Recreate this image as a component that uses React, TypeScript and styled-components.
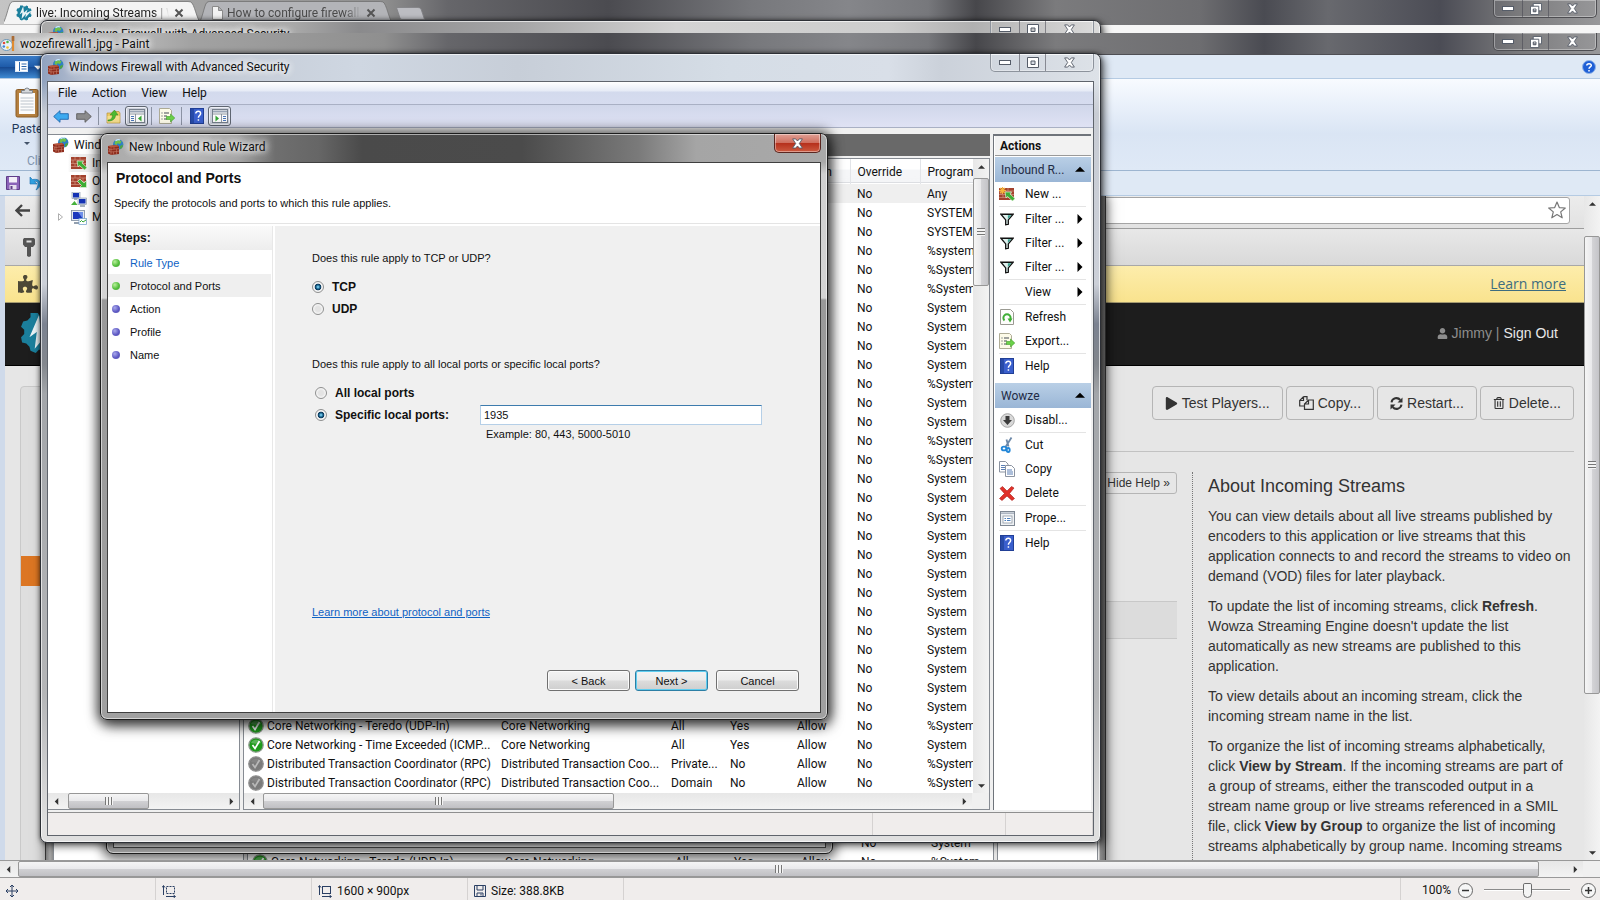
import React from "react";
import styled, { createGlobalStyle, css } from "styled-components";
import { FaPlay, FaUser, FaRegTrashAlt, FaPuzzlePiece } from "react-icons/fa";

const UI = `Roboto, "Open Sans", "Noto Sans", sans-serif`;
const SANS = `"Liberation Sans", Arial, sans-serif`;

const GlobalStyle = createGlobalStyle`
  * { box-sizing: border-box; }
  html, body, #root { height: 100%; }
  body { margin: 0; font: 12px/16px ${UI}; color: #111; overflow: hidden; background: #555; }
  button, input { font: inherit; color: inherit; }
  button { padding: 0; border: 0; background: none; }
  svg { display: block; flex: none; }
  h1, h2, p { margin: 0; }
`;

/* ---------- icons ---------- */

const FirewallIcon = () => (
  <svg width="16" height="16" viewBox="0 0 16 16">
    <circle cx="10.2" cy="5.4" r="5.2" fill="#2d7fc4" />
    <path d="M7 2.4C9 1 12 .8 13.6 2.6L12 5 9.600 4.200 8.400 6 6.600 5z" fill="#6fc04a" />
    <path d="M12 7l2.800-1.200c.2 2-.8 3.600-2.400 4.400z" fill="#4fa53b" />
    <path d="M7.500 1.800C9 .7 11 .5 12 1" stroke="#cfeaff" strokeWidth="1.200" fill="none" />
    <path d="M0 7l9-1 2 1.600V15L3 16l-3-1.500z" fill="#8e2c1d" />
    <path d="M0 7l9-1 2 1.600-8 .9z" fill="#b9573f" />
    <path d="M0 9.500l3 1 8-.9M0 12l3 1 8-.8M3 8.500V16M6 8.200v2M8.500 10.200v2M5.500 12.800v2.600M8.500 12.300V15M1.500 9.800v2.500" stroke="#d08a76" strokeWidth=".5" fill="none" />
  </svg>
);

const BrickIcon = ({ dir, star }: { dir: "in" | "out"; star?: boolean }) => (
  <svg width="16" height="14" viewBox="0 0 16 14">
    <rect x="0" y="1" width="15" height="12" fill="#a3422e" />
    <path d="M0 4h15M0 7.500h15M0 10.500h15M4 1v3M9 1v3M2 4v3.500M7 4v3.500M12 4v3.500M4 7.500v3M9 7.500v3" stroke="#d39480" strokeWidth=".7" />
    {dir === "in" ? (
      <path d="M6 5h6.500l-1.500 2L16 11.500 13.500 14 8.500 9.500 7 11z" fill="#3fae35" stroke="#e2f7dc" strokeWidth=".7" />
    ) : (
      <path d="M15.500 13.500H8.500l2-2L6.500 7.500 9 5l4 4 2.500-2.500z" fill="#3fae35" stroke="#e2f7dc" strokeWidth=".7" />
    )}
    {star && <path d="M3.500 0v7M0 3.500h7M1 1l5 5M6 1L1 6" stroke="#f6b53a" strokeWidth="1.200" />}
  </svg>
);

const ComputersIcon = () => (
  <svg width="16" height="15" viewBox="0 0 16 15">
    <rect x="1" y="0" width="8" height="6.500" fill="#dfe6ee" stroke="#8392a3" strokeWidth=".6" />
    <rect x="2" y="1" width="6" height="4.500" fill="#1533b4" />
    <rect x="7" y="6" width="8.500" height="6.500" fill="#dfe6ee" stroke="#8392a3" strokeWidth=".6" />
    <rect x="8" y="7" width="6.500" height="4.500" fill="#1533b4" />
    <path d="M9 14h5M3 7h3" stroke="#8b99a8" strokeWidth="1.400" />
    <path d="M0 13l3.500-4 3 4z" fill="#46b13c" />
  </svg>
);

const MonitorIcon = () => (
  <svg width="16" height="15" viewBox="0 0 16 15">
    <rect x=".5" y=".5" width="13" height="10" fill="#e3e9f0" stroke="#7c8b9e" strokeWidth=".8" />
    <rect x="2" y="2" width="10" height="7" fill="#1c39bd" />
    <path d="M7 2h5v7z" fill="#6f90e8" />
    <path d="M3 13h6" stroke="#93a0b0" strokeWidth="2" />
    <rect x="8" y="8.500" width="7.500" height="6" fill="#fff" stroke="#6b9ccb" strokeWidth=".7" />
    <path d="M9 12l1.500-1.500 1.500 1.500 3-2" stroke="#35a634" fill="none" />
  </svg>
);

const ArrowIcon = ({ dir }: { dir: "left" | "right" }) => (
  <svg width="16" height="13" viewBox="0 0 16 13">
    {dir === "left" ? (
      <path d="M.7 6.500L7 .7v3h8.300v5.600H7v3z" fill="#3eaaf0" stroke="#1f67ad" strokeWidth=".9" />
    ) : (
      <path d="M15.300 6.500L9 .7v3H.7v5.600H9v3z" fill="#8b8b8b" stroke="#5c5c5c" strokeWidth=".9" />
    )}
  </svg>
);

const FolderUpIcon = () => (
  <svg width="15" height="15" viewBox="0 0 15 15">
    <path d="M1 4h5l1-1.500h6L14 4v10H1z" fill="#eccb67" stroke="#b8923a" strokeWidth=".7" />
    <path d="M1.500 7H13.500v6.500h-12z" fill="#f5de8f" />
    <path d="M2 11c3 0 4.500-2 4.500-5H4L8.500 1 12 6H9.500c0 4-3 6-7.500 6z" fill="#4cb932" stroke="#2f8a1e" strokeWidth=".5" />
  </svg>
);

const PaneIcon = ({ side }: { side: "left" | "right" }) => (
  <svg width="16" height="14" viewBox="0 0 16 14">
    <rect x=".5" y=".5" width="15" height="13" fill="#fbfbfb" stroke="#77808c" />
    <path d="M1 2.500h14" stroke="#9aa5b5" strokeWidth="2" />
    <path d="M1 5h14" stroke="#77808c" strokeWidth=".8" />
    {side === "left" ? (
      <>
        <path d="M6.500 5v9" stroke="#77808c" strokeWidth=".8" />
        <path d="M2 7.500h3M2 9.500h3M2 11.500h3" stroke="#4b76b8" />
        <path d="M12.500 6.500v6L9 9.500z" fill="#35a634" />
      </>
    ) : (
      <>
        <path d="M9.500 5v9" stroke="#77808c" strokeWidth=".8" />
        <path d="M11 7.500h3M11 9.500h3M11 11.500h3" stroke="#4b76b8" />
        <path d="M3.500 6.500v6L7 9.500z" fill="#35a634" />
      </>
    )}
  </svg>
);

const ExportIcon = () => (
  <svg width="16" height="16" viewBox="0 0 16 16">
    <path d="M.5.5h10l2 2v13H.5z" fill="#fdfbe9" stroke="#a7a48c" strokeWidth=".9" />
    <path d="M2.500 5h1M2.500 8h1M2.500 11h1M5 5h5M5 8h3M5 11h3" stroke="#444b55" strokeWidth="1.100" />
    <path d="M7.500 8.500h4V6l4.300 4-4.300 4v-2.500h-4z" fill="#6bd14a" stroke="#3f9c27" strokeWidth=".6" />
  </svg>
);

const HelpBookIcon = () => (
  <svg width="14" height="16" viewBox="0 0 14 16">
    <rect x=".5" y=".5" width="13" height="15" fill="#3a5fcd" stroke="#213f96" />
    <path d="M1 1h3v14H1z" fill="#274aa8" />
    <path d="M5.800 5.500C5.800 2.600 10.600 2.700 10.600 5.500c0 2-2.200 2-2.200 4.200M8.400 11.200v1.600" stroke="#fff" strokeWidth="1.500" fill="none" />
  </svg>
);

const FilterIcon = () => (
  <svg width="14" height="13" viewBox="0 0 16 14">
    <path d="M1 1h14L9.500 7.500v5L6.500 13V7.500z" fill="#dff1ee" stroke="#111" strokeWidth="1.500" />
    <path d="M9 2h4L9 6.500z" fill="#3ea393" />
  </svg>
);

const RefreshPageIcon = () => (
  <svg width="14" height="16" viewBox="0 0 14 16">
    <path d="M.5.500h10l3 3v12H.5z" fill="#fdfdfb" stroke="#9a9a92" />
    <path d="M4.500 11.500A3.600 3.600 0 1 1 9.500 11.500" stroke="#3fae35" strokeWidth="2" fill="none" />
    <path d="M7.500 9.500h5L10 13.500z" fill="#3fae35" />
  </svg>
);

const DisableIcon = () => (
  <svg width="15" height="15" viewBox="0 0 15 15">
    <circle cx="7.500" cy="7.500" r="6.800" fill="#d8d8d8" stroke="#a5a5a5" />
    <path d="M5.500 3h4v4H12l-4.500 5L3 7h2.500z" fill="#3b3b3b" />
  </svg>
);

const CutIcon = () => (
  <svg width="14" height="16" viewBox="0 0 14 16">
    <path d="M11.500.5L5.500 10M6.500 2.500l2 7" stroke="#6c88a8" strokeWidth="1.800" fill="none" />
    <ellipse cx="4" cy="11.500" rx="2.300" ry="1.900" fill="none" stroke="#2387d8" strokeWidth="1.900" />
    <ellipse cx="8.200" cy="13" rx="1.500" ry="2" fill="none" stroke="#2387d8" strokeWidth="1.900" />
  </svg>
);

const CopyPagesIcon = () => (
  <svg width="16" height="16" viewBox="0 0 16 16">
    <path d="M.5.5h6l2.500 2.500v8H.5z" fill="#fff" stroke="#8b93a0" />
    <path d="M2 4.500h4M2 6.500h4M2 8.500h4" stroke="#5b7fb5" />
    <path d="M6.500 4.500h6l3 3v8h-9z" fill="#fff" stroke="#8b93a0" />
    <path d="M8 9h5M8 11h6M8 13h6" stroke="#5b7fb5" />
  </svg>
);

const DeleteIcon = () => (
  <svg width="16" height="15" viewBox="0 0 16 15">
    <path d="M1 2.500L3.500.5 8 5l4.500-4.500L15 2 10.500 7.500l5 5L13 14.500 8 10l-5 4.500-2.500-2 5-5z" fill="#e03129" stroke="#a81812" strokeWidth=".6" />
  </svg>
);

const PropertiesIcon = () => (
  <svg width="15" height="15" viewBox="0 0 15 15">
    <rect x=".5" y=".5" width="14" height="14" fill="#eef1f4" stroke="#7f8894" />
    <path d="M1 2.200h13" stroke="#aab3bf" strokeWidth="1.500" />
    <rect x="3" y="5" width="9" height="7" fill="#fff" stroke="#8e98a5" strokeWidth=".8" />
    <path d="M4.500 7.500h1.500M7 7.500h3.500M4.500 9.500h1.500M7 9.500h3.500" stroke="#4f81bd" />
  </svg>
);

const CheckIcon = ({ on }: { on: boolean }) => (
  <svg width="16" height="16" viewBox="0 0 16 16">
    <circle cx="8" cy="8" r="7.200" fill={on ? "#1f9a1c" : "#7b7b7b"} stroke={on ? "#8c9a8c" : "#8f8f8f"} strokeWidth="1.300" />
    <path d="M3 6a5.500 5.500 0 0 1 10 0c-3 1-6 1-10 0z" fill="#fff" opacity={on ? ".25" : ".08"} />
    <path d="M4.500 8l2.500 3.500L11.500 4" stroke={on ? "#fff" : "#b9b9b9"} strokeWidth="1.700" fill="none" />
  </svg>
);

const WowzaIcon = ({ size }: { size: number }) => (
  <svg width={size} height={size} viewBox="0 0 40 40">
    <path d="M17 1l2 3h4l3-3 4 2v4l3 2 4 0 2 5-3 3v5l3 3-2 5h-4l-3 3v4l-5 2-3-3h-4l-3 3-5-2-1-4-3-3-4-1-1-5 3-3v-4l-3-3 2-5 4-1 3-3 0-4z" fill="#1b7f9c" />
    <path d="M18 3L9 24l7-5-2 16L25 22l-2 10L40 13l-14 7 3-9-9 8z" fill="#e9f3f6" />
  </svg>
);

const PageIcon = () => (
  <svg width="11" height="14" viewBox="0 0 11 14">
    <path d="M.5.5h6l4 4v9H.5zM6.500.5v4h4" fill="#f2f2f2" stroke="#8b8b8b" />
  </svg>
);

const PaletteIcon = () => (
  <svg width="16" height="16" viewBox="0 0 16 16">
    <ellipse cx="6.500" cy="9" rx="6" ry="5.500" fill="#e8f1f8" stroke="#6a95b8" />
    <circle cx="4" cy="7" r="1.300" fill="#e04b3a" /><circle cx="7.500" cy="6" r="1.300" fill="#4db748" />
    <circle cx="3.800" cy="10.500" r="1.300" fill="#3f83d6" /><circle cx="7.500" cy="11.500" r="1.300" fill="#f2c230" />
    <path d="M13 1v14" stroke="#e08a2e" strokeWidth="2.200" /><path d="M13 0v5" stroke="#a96a35" strokeWidth="2.600" />
  </svg>
);

const FileTabIcon = () => (
  <svg width="13" height="11" viewBox="0 0 13 11">
    <rect x=".5" y=".5" width="12" height="10" fill="#fff" stroke="#dce9f8" />
    <path d="M4.500 1v9" stroke="#2a66ad" /><path d="M6.500 3h5M6.500 5.500h5M6.500 8h5" stroke="#2a66ad" />
  </svg>
);

const ClipboardIcon = () => (
  <svg width="24" height="31" viewBox="0 0 24 31">
    <rect x="1" y="2.500" width="22" height="27.500" rx="1.500" fill="#b5803f" stroke="#8b5c26" />
    <rect x="4" y="6" width="16" height="21" fill="#fcfcfc" />
    <path d="M5.500 11h13M5.500 14h13M5.500 17h13M5.500 20h13M5.500 23h13" stroke="#bcc4cc" />
    <path d="M6.500 6V3.500h3a2.500 2.500 0 0 1 5 0h3V6z" fill="#d5d8db" stroke="#777e86" strokeWidth=".9" />
  </svg>
);

const SaveIcon = () => (
  <svg width="14" height="14" viewBox="0 0 14 14">
    <path d="M.5.500h13v13H.5z" fill="#8b63b8" stroke="#5f3e88" />
    <rect x="3" y="1" width="8" height="5.500" fill="#f3eff8" /><rect x="3.500" y="9" width="7" height="4.500" fill="#e7e0ef" />
    <rect x="4.500" y="10" width="2" height="3" fill="#5f3e88" />
  </svg>
);

const UndoIcon = () => (
  <svg width="14" height="15" viewBox="0 0 14 15">
    <path d="M1 1v7h7L5.500 5.500C9 4.500 10.500 8 7 14c7-4 6-12-3.500-10.500z" fill="#2fa0e0" stroke="#1b6fae" strokeWidth=".6" />
  </svg>
);

const BackIcon = () => (
  <svg width="15" height="13" viewBox="0 0 15 13">
    <path d="M7 1L1.500 6.500 7 12M2 6.500h13" stroke="#444" strokeWidth="2.300" fill="none" />
  </svg>
);

const KeyIcon = () => (
  <svg width="14" height="20" viewBox="0 0 14 20">
    <path d="M2 1h10l1 1.500v5L11 10H9v9l-2 1-2-1v-9H3L1 7.500v-5zM4.500 3.500v2h5v-2z" fill="#555" fillRule="evenodd" />
  </svg>
);

const StarIcon = () => (
  <svg width="18" height="18" viewBox="0 0 18 18">
    <path d="M9 1l2.300 5.600 6 .4-4.600 3.900 1.500 5.900L9 13.600l-5.200 3.200 1.500-5.900L.7 7l6-.4z" fill="#fff" stroke="#777" strokeWidth="1.200" strokeLinejoin="round" />
  </svg>
);

const HelpRoundIcon = () => (
  <svg width="14" height="14" viewBox="0 0 14 14">
    <circle cx="7" cy="7" r="6.500" fill="#1f5fd6" stroke="#8fb3e8" />
    <path d="M4.800 5.600C4.800 3 9.300 3 9.300 5.500 9.300 7 7 7 7 8.800M7 10v1.400" stroke="#fff" strokeWidth="1.500" fill="none" />
  </svg>
);

const FilesIcon = () => (
  <svg width="15" height="14" viewBox="0 0 15 14">
    <path d="M4.500.7H8v3.500M4.500.7L.7 4.500V10H5M4.500.7v3.800H.7" fill="none" stroke="#333" strokeWidth="1.200" />
    <path d="M9.500 4h4.800v9.300H5.500V8zM9.500 4v4h-4" fill="none" stroke="#333" strokeWidth="1.200" />
  </svg>
);

const RestartIcon = () => (
  <svg width="13" height="13" viewBox="0 0 13 13">
    <path d="M1.500 5.300A5 5 0 0 1 10.300 3M11.500 7.700A5 5 0 0 1 2.700 10" fill="none" stroke="#333" strokeWidth="2" />
    <path d="M12.500.5v5h-5zM.5 12.500v-5h5z" fill="#333" />
  </svg>
);

const MoveIcon = () => (
  <svg width="12" height="12" viewBox="0 0 12 12">
    <path d="M6 0v12M0 6h12M4 2l2-2 2 2M4 10l2 2 2-2M2 4L0 6l2 2M10 4l2 2-2 2" stroke="#2a3f63" fill="none" />
  </svg>
);

const SizeIcon = ({ dashed }: { dashed?: boolean }) => (
  <svg width="14" height="13" viewBox="0 0 14 13">
    <path d="M1.500 1v9M0 2.500L1.500.5 3 2.500M4 11.500h9M11.500 10l2 1.500-2 1.500" stroke="#2a3f63" fill="none" />
    <rect x="4.500" y="1.500" width="8" height="7" fill="none" stroke="#2a3f63" strokeDasharray={dashed ? "2 1" : undefined} />
  </svg>
);

const DiskIcon = () => (
  <svg width="12" height="12" viewBox="0 0 12 12">
    <path d="M.5.500h11v11H.5zM3 .5v4.500h6V.5M3 11.500V8h6v3.500M7 8.500v2" stroke="#2a3f63" fill="none" />
  </svg>
);

const ExpanderIcon = () => (
  <svg width="5" height="8" viewBox="0 0 5 8"><path d="M.5.7v6.600L4.500 4z" fill="#fff" stroke="#999" strokeWidth=".8" /></svg>
);

const Tri = ({ dir, size = 6, color = "#333" }: { dir: "up" | "down" | "left" | "right"; size?: number; color?: string }) => {
  const d = { up: "M0 8l6-6 6 6z", down: "M0 4l6 6 6-6z", left: "M9 0v12L3 6z", right: "M3 0v12l6-6z" }[dir];
  return <svg width={size} height={size} viewBox="0 0 12 12"><path d={d} fill={color} /></svg>;
};

const MinGlyph = () => <svg width="12" height="6" viewBox="0 0 12 6"><rect x=".5" y=".5" width="11" height="4" fill="#fff" stroke="#555c68" /></svg>;
const MaxGlyph = () => (
  <svg width="12" height="11" viewBox="0 0 12 11"><path d="M.5.5h11v10H.5zM4 4v3.500h4V4z" fill="#fff" fillRule="evenodd" stroke="#555c68" /></svg>
);
const RestoreGlyph = () => (
  <svg width="12" height="12" viewBox="0 0 13 13">
    <path d="M3.500.5h9v8h-9z" fill="#fff" stroke="#555c68" />
    <path d="M.5 3.500h9v9h-9zM3.500 6.500v3h3v-3z" fill="#fff" fillRule="evenodd" stroke="#555c68" />
  </svg>
);
const CloseGlyph = () => (
  <svg width="11" height="11" viewBox="0 0 12 11">
    <path d="M.7.500h3.300L6 2.800 8 .5h3.300L8 5.500l3.300 5H8L6 8.200 4 10.500H.7L4 5.500z" fill="#fff" stroke="#555c68" strokeWidth="1" />
  </svg>
);

/* ---------- shared window parts ---------- */

const Desktop = styled.div`
  position: relative;
  height: 100vh;
  overflow: hidden;
`;

const glass = css`
  background: linear-gradient(90deg, #c4c4c4 0, #b4b4b4 9%, #a2a2a2 12%, #8f8f8f 24%, #66666a 28%, #4b4b50 38%, #77787c 47%,
    #85868a 53%, #77787c 58%, #47474b 61%, #7b7b7d 66%, #6d6d70 75%, #4a4b52 79%, #68696e 83%, #4b4c55 90%, #7b7b7d 95%, #98989a 100%);
`;

const CaptionGroup = styled.div<{ $dark?: boolean }>`
  display: flex;
  height: 18px;
  border: 1px solid ${(p) => (p.$dark ? "#4e4e52" : "#8d939c")};
  border-top: 0;
  border-radius: 0 0 5px 5px;
  box-shadow: inset 0 0 0 1px rgba(255, 255, 255, 0.35);
  align-self: flex-start;
`;

const CaptionButton = styled.button<{ $w: number }>`
  width: ${(p) => p.$w}px;
  display: grid;
  place-items: center;
  & + & { border-left: 1px solid rgba(70, 70, 80, 0.55); }
`;

const Captions = ({ restore, dark }: { restore?: boolean; dark?: boolean }) => (
  <CaptionGroup $dark={dark}>
    <CaptionButton $w={28} aria-label="Minimize"><MinGlyph /></CaptionButton>
    <CaptionButton $w={26} aria-label="Maximize">{restore ? <RestoreGlyph /> : <MaxGlyph />}</CaptionButton>
    <CaptionButton $w={48} aria-label="Close"><CloseGlyph /></CaptionButton>
  </CaptionGroup>
);

const TitleText = styled.span`
  flex: 1;
  white-space: nowrap;
  text-shadow: 0 0 6px #fff, 0 0 8px #fff, 0 0 10px rgba(255, 255, 255, 0.8);
`;

const ScrollTrack = styled.div<{ $v?: boolean }>`
  display: flex;
  flex: none;
  flex-direction: ${(p) => (p.$v ? "column" : "row")};
  ${(p) => (p.$v ? "width: 16px;" : "height: 16px;")}
  background: ${(p) => (p.$v ? "linear-gradient(90deg,#e7e7e7,#f3f3f3)" : "linear-gradient(#e7e7e7,#f3f3f3)")};
`;

const ScrollArrow = styled.button<{ $end?: boolean }>`
  flex: none;
  width: 16px;
  height: 16px;
  display: grid;
  place-items: center;
  ${(p) => p.$end && "margin-top: auto; margin-left: auto;"}
`;

const ScrollThumb = styled.div<{ $v?: boolean; $gap: number; $size: string }>`
  display: grid;
  place-items: center;
  border: 1px solid #979797;
  border-radius: 2px;
  ${(p) =>
    p.$v
      ? `height: ${p.$size}; margin-top: ${p.$gap}px; background: linear-gradient(90deg,#f5f5f5,#e9e9eb 48%,#d3d3d6 52%,#c4c4c8);`
      : `width: ${p.$size}; margin-left: ${p.$gap}px; background: linear-gradient(#f5f5f5,#e9e9eb 48%,#d0d0d3 52%,#c0c0c4);`}
`;

const ScrollGrip = styled.span<{ $v?: boolean }>`
  width: 8px;
  height: 8px;
  background: repeating-linear-gradient(${(p) => (p.$v ? "180deg" : "90deg")}, #777 0 1px, #f4f4f4 1px 3px);
`;

const Scrollbar = ({ v, gap, size }: { v?: boolean; gap: number; size: string }) => (
  <ScrollTrack $v={v}>
    <ScrollArrow aria-label="Scroll back"><Tri dir={v ? "up" : "left"} size={7} /></ScrollArrow>
    <ScrollThumb $v={v} $gap={gap} $size={size}><ScrollGrip $v={v} /></ScrollThumb>
    <ScrollArrow $end aria-label="Scroll forward"><Tri dir={v ? "down" : "right"} size={7} /></ScrollArrow>
  </ScrollTrack>
);

/* ---------- browser behind ---------- */

const BrowserTop = styled.header`
  ${glass}
  display: flex;
  justify-content: space-between;
  height: 25px;
  padding-right: 3px;
`;

const TabStrip = styled.div`
  display: flex;
  align-items: flex-end;
  padding-left: 4px;
`;

const Tab = styled.div<{ $active?: boolean; $w: number }>`
  position: relative;
  width: ${(p) => p.$w}px;
  height: 24px;
  display: flex;
  align-items: center;
  gap: 4px;
  padding: 0 9px 0 12px;
  color: ${(p) => (p.$active ? "#222" : "#4c4c4c")};
  > * { position: relative; }
`;

const TabShape = styled.svg`
  && { position: absolute; }
  inset: 0;
  width: 100%;
  height: 100%;
`;

const TabOutline = ({ fill }: { fill: string }) => (
  <TabShape viewBox="0 0 196 24" preserveAspectRatio="none">
    <path d="M-3 24C2 22 4 4 7 1.500Q8 .5 10 .5H184Q187 .5 188 2C192 8 193 21 199 24z" fill={fill} stroke="#707070" strokeWidth=".8" />
  </TabShape>
);

const TabLabel = styled.span`
  flex: 1;
  overflow: hidden;
  white-space: nowrap;
  mask-image: linear-gradient(90deg, #000 88%, transparent);
`;

const TabClose = styled.button`
  width: 18px;
  height: 12px;
`;

const NewTab = styled.button`
  width: 29px;
  height: 13px;
  margin: 0 0 5px 4px;
`;

const BrowserBar = styled.div`
  height: 20px;
  background: #f6f6f6;
`;

const CloseX = () => (
  <svg width="12" height="12" viewBox="0 0 12 12"><path d="M2.500 2.500l7 7M9.500 2.500l-7 7" stroke="#555" strokeWidth="2" /></svg>
);

/* ---------- console window ---------- */

const ConsoleWindow = styled.section<{ $top: number; $back?: boolean }>`
  position: absolute;
  left: 40px;
  top: ${(p) => p.$top}px;
  width: 1061px;
  height: 790px;
  display: flex;
  flex-direction: column;
  padding: 0 6px 6px;
  border: 1px solid #2d3036;
  border-radius: 7px;
  background: ${(p) =>
    p.$back
      ? "linear-gradient(90deg,#a9a9a9 0,#bdbdbd 12%,#a8a8a8 24%,#8a8a8c 30%,#a5a5a6 45%,#d3d3d3 60%,#cdcdcd 80%,#b0b0b0 88%,#dcdcdc 100%)"
      : `linear-gradient(#0000 28px,#c8ccd4 60px,#ccd0d8 230px,#7b8290 270px,#83878d 310px,#a3a6aa 340px,#b5b6b8 640px,#dfdfdf 770px),
         linear-gradient(90deg,#8fa1be 0,#b7c1d2 4%,#c3cad5 15%,#cfd7e2 30%,#c7ced8 45%,#d5dde6 65%,#d9dfe8 80%,#cbd1da 85%,#dde2e8 100%)`};
  box-shadow: inset 0 0 0 1px rgba(255, 255, 255, 0.65), 3px 3px 8px rgba(0, 0, 0, 0.6), 0 0 4px rgba(0, 0, 0, 0.5);
`;

const TitleBar = styled.div<{ $h: number }>`
  flex: none;
  display: flex;
  align-items: center;
  gap: 5px;
  height: ${(p) => p.$h}px;
  padding: 0 0 2px 1px;
`;

const ConsoleClient = styled.div`
  flex: 1;
  min-height: 0;
  display: flex;
  flex-direction: column;
  border: 1px solid #5f646c;
  background: #f0f0f0;
`;

const MenuBar = styled.nav`
  display: flex;
  align-items: center;
  gap: 15px;
  height: 23px;
  padding-left: 10px;
  border-bottom: 1px solid #a9b0c4;
  background: linear-gradient(#fff, #e6ebf6 9px, #d3daed 10px, #d6dcef);
`;

const ToolBar = styled.div`
  display: flex;
  align-items: center;
  height: 23px;
  padding-left: 1px;
  border-bottom: 1px solid #a9b0c4;
  background: linear-gradient(#d0d7ea, #dfe2f4);
`;

const ToolButton = styled.button<{ $pressed?: boolean }>`
  width: 23px;
  height: 20px;
  display: grid;
  place-items: center;
  ${(p) => p.$pressed && "border: 1px solid #5f6672; border-radius: 3px; background: #ccd0dc; box-shadow: inset 0 0 0 1px #eef0f6;"}
`;

const ToolSep = styled.span`
  width: 1px;
  height: 18px;
  margin: 0 3px;
  background: #8c93a4;
`;

const Panes = styled.div`
  flex: 1;
  min-height: 0;
  display: grid;
  grid-template-columns: 192px minmax(0, 1fr) 98px;
  gap: 3px;
  padding: 6px 2px 2px 0;
`;

const TreePane = styled.div`
  display: flex;
  flex-direction: column;
  background: #fff;
  border: solid #868b92;
  border-width: 1px 1px 1px 0;
`;

const TreeList = styled.ul`
  flex: 1;
  margin: 0;
  padding: 1px 0 0;
  list-style: none;
`;

const TreeItem = styled.li<{ $level: number; $selected?: boolean }>`
  display: flex;
  align-items: center;
  gap: 5px;
  height: 18px;
  padding-left: ${(p) => (p.$level ? 10 : 5)}px;
  white-space: nowrap;
  ${(p) => p.$selected && "background: linear-gradient(90deg,#fff 20px,#ededed 24px);"}
`;

const ExpandSlot = styled.span`
  width: 8px;
`;

const ListPane = styled.div`
  display: flex;
  flex-direction: column;
  min-height: 0;
`;

const ListCaption = styled.div`
  height: 22px;
  flex: none;
  background: #696969;
`;

const ListFrame = styled.div`
  flex: 1;
  min-height: 0;
  margin-top: 2px;
  border: 1px solid #868b92;
  background: #fff;
  display: flex;
  flex-direction: column;
`;

const ListScroll = styled.div`
  flex: 1;
  min-height: 0;
  display: flex;
`;

const TableClip = styled.div`
  flex: 1;
  overflow: hidden;
`;

const RuleTable = styled.table`
  width: 760px;
  table-layout: fixed;
  border-collapse: collapse;
  th, td { padding: 0 0 0 7px; height: 19px; text-align: left; font-weight: 400; white-space: nowrap; overflow: hidden; }
  th { height: 25px; border-right: 1px solid #e2e4e8; background: linear-gradient(#fff 10px, #f5f6f8 11px, #f4f5f7 23px, #dcdee2 23px 24px, #fff 24px); }
  td:first-child { padding-left: 4px; }
  tr[aria-selected="true"] td { background: #efefef; }
`;

const RuleName = styled.span`
  display: flex;
  gap: 3px;
`;

const ListFoot = styled.div`
  display: flex;
  padding-right: 17px;
  background: #f0f0f0;
  > * { flex: 1; }
`;

const ActionPane = styled.aside`
  background: #fff;
  border: solid #6f747b;
  border-width: 2px 0 0 1px;
  padding: 0 0 0 1px;
  display: flex;
  flex-direction: column;
`;

const ActionTitle = styled.h2`
  height: 20px;
  padding-left: 5px;
  font: bold 12px/20px ${UI};
  background: #f2f2f2;
  border-bottom: 1px solid #9a9a9a;
  margin-bottom: 1px;
`;

const ActionGroup = styled.div`
  display: flex;
  align-items: center;
  justify-content: space-between;
  height: 25px;
  padding: 0 6px;
  color: #1f2b45;
  background: linear-gradient(#b9cfe6, #9ab6d6);
`;

const ActionList = styled.ul`
  margin: 0 0 5px;
  padding: 0;
  list-style: none;
`;

const ActionRow = styled.li<{ $sep?: boolean }>`
  padding-left: 4px;
  ${(p) => p.$sep && "&::after { content: ''; display: block; height: 1px; margin-right: 5px; background: #e4e4e4; }"}
`;

const ActionButton = styled.button`
  display: grid;
  grid-template-columns: 16px 1fr 12px;
  gap: 10px;
  align-items: center;
  width: 100%;
  height: 24px;
  padding-right: 5px;
  text-align: left;
  white-space: nowrap;
  > svg { justify-self: center; }
`;

const StatusStrip = styled.div`
  display: flex;
  height: 23px;
  border-top: 1px solid #8f8f8f;
  background: #f0edec;
`;

const StatusCell = styled.span<{ $w?: number }>`
  ${(p) => (p.$w ? `width: ${p.$w}px;` : "flex: 1;")}
  border-right: 1px solid #d5d2d1;
`;

type Rule = { prog: string; name?: string; group?: string; profile?: string; enabled?: string; on?: boolean };
const S: Rule = { prog: "System" };
const P: Rule = { prog: "%System" };
const RULES: Rule[] = [
  { prog: "Any" }, { prog: "SYSTEM" }, { prog: "SYSTEM" }, { prog: "%system" }, P, P, S, S, S, S, P, S, S, P, P,
  S, S, S, S, S, S, S, S, S, S, S, S, S,
  { prog: "%System", name: "Core Networking - Teredo (UDP-In)", group: "Core Networking", profile: "All", enabled: "Yes", on: true },
  { prog: "System", name: "Core Networking - Time Exceeded (ICMP...", group: "Core Networking", profile: "All", enabled: "Yes", on: true },
  { prog: "%System", name: "Distributed Transaction Coordinator (RPC)", group: "Distributed Transaction Coo...", profile: "Private...", enabled: "No", on: false },
  { prog: "%System", name: "Distributed Transaction Coordinator (RPC)", group: "Distributed Transaction Coo...", profile: "Domain", enabled: "No", on: false },
];

const RuleCols = () => (
  <colgroup>
    <col width="250" /><col width="170" /><col width="59" /><col width="67" /><col width="60" /><col width="70" /><col />
  </colgroup>
);

const RuleRow = ({ r, selected }: { r: Rule; selected?: boolean }) => (
  <tr aria-selected={selected}>
    <td>{r.name && <RuleName><CheckIcon on={!!r.on} />{r.name}</RuleName>}</td>
    <td>{r.group}</td>
    <td>{r.profile}</td>
    <td>{r.enabled}</td>
    <td>{r.name && "Allow"}</td>
    <td>No</td>
    <td>{r.prog}</td>
  </tr>
);

type Act = { icon?: React.ReactNode; label: string; more?: boolean; sep?: boolean };
const INBOUND: Act[] = [
  { icon: <BrickIcon dir="in" star />, label: "New ...", sep: true },
  { icon: <FilterIcon />, label: "Filter ...", more: true },
  { icon: <FilterIcon />, label: "Filter ...", more: true },
  { icon: <FilterIcon />, label: "Filter ...", more: true, sep: true },
  { label: "View", more: true, sep: true },
  { icon: <RefreshPageIcon />, label: "Refresh" },
  { icon: <ExportIcon />, label: "Export...", sep: true },
  { icon: <HelpBookIcon />, label: "Help" },
];
const WOWZE: Act[] = [
  { icon: <DisableIcon />, label: "Disabl...", sep: true },
  { icon: <CutIcon />, label: "Cut" },
  { icon: <CopyPagesIcon />, label: "Copy" },
  { icon: <DeleteIcon />, label: "Delete", sep: true },
  { icon: <PropertiesIcon />, label: "Prope...", sep: true },
  { icon: <HelpBookIcon />, label: "Help" },
];

const Actions = ({ items }: { items: Act[] }) => (
  <ActionList>
    {items.map((a, i) => (
      <ActionRow key={i} $sep={a.sep}>
        <ActionButton>
          {a.icon ?? <span />}
          <span>{a.label}</span>
          {a.more && <Tri dir="right" size={10} color="#000" />}
        </ActionButton>
      </ActionRow>
    ))}
  </ActionList>
);

const Console = () => (
  <ConsoleWindow $top={53}>
    <TitleBar $h={27}><FirewallIcon /><TitleText>Windows Firewall with Advanced Security</TitleText><Captions /></TitleBar>
    <ConsoleClient>
      <MenuBar><span>File</span><span>Action</span><span>View</span><span>Help</span></MenuBar>
      <ToolBar>
        <ToolButton aria-label="Back"><ArrowIcon dir="left" /></ToolButton>
        <ToolButton aria-label="Forward"><ArrowIcon dir="right" /></ToolButton>
        <ToolSep />
        <ToolButton aria-label="Up one level"><FolderUpIcon /></ToolButton>
        <ToolButton $pressed aria-label="Console tree"><PaneIcon side="left" /></ToolButton>
        <ToolSep />
        <ToolButton aria-label="Export list"><ExportIcon /></ToolButton>
        <ToolSep />
        <ToolButton aria-label="Help"><HelpBookIcon /></ToolButton>
        <ToolButton $pressed aria-label="Action pane"><PaneIcon side="right" /></ToolButton>
      </ToolBar>
      <Panes>
        <TreePane>
          <TreeList>
            <TreeItem $level={0}><FirewallIcon />Windows</TreeItem>
            <TreeItem $level={1} $selected><ExpandSlot /><BrickIcon dir="in" />Inbound</TreeItem>
            <TreeItem $level={1}><ExpandSlot /><BrickIcon dir="out" />Outbound</TreeItem>
            <TreeItem $level={1}><ExpandSlot /><ComputersIcon />Connection</TreeItem>
            <TreeItem $level={1}><ExpandSlot><ExpanderIcon /></ExpandSlot><MonitorIcon />Monitoring</TreeItem>
          </TreeList>
          <Scrollbar gap={4} size="81px" />
        </TreePane>
        <ListPane>
          <ListCaption />
          <ListFrame>
            <ListScroll>
              <TableClip>
                <RuleTable>
                  <RuleCols />
                  <thead>
                    <tr><th>Name</th><th>Group</th><th>Profile</th><th>Enabled</th><th>Action</th><th>Override</th><th>Program</th></tr>
                  </thead>
                  <tbody>{RULES.map((r, i) => <RuleRow key={i} r={r} selected={i === 0} />)}</tbody>
                </RuleTable>
              </TableClip>
              <Scrollbar v gap={3} size="108px" />
            </ListScroll>
            <ListFoot><Scrollbar gap={3} size="351px" /></ListFoot>
          </ListFrame>
        </ListPane>
        <ActionPane>
          <ActionTitle>Actions</ActionTitle>
          <ActionGroup>Inbound R...<Tri dir="up" size={10} color="#000" /></ActionGroup>
          <Actions items={INBOUND} />
          <ActionGroup>Wowze<Tri dir="up" size={10} color="#000" /></ActionGroup>
          <Actions items={WOWZE} />
        </ActionPane>
      </Panes>
      <StatusStrip><StatusCell /><StatusCell $w={133} /><StatusCell $w={87} /></StatusStrip>
    </ConsoleClient>
  </ConsoleWindow>
);

/* ---------- wizard ---------- */

const WizardWindow = styled.section`
  position: absolute;
  left: 100px;
  top: 133px;
  width: 728px;
  height: 587px;
  display: flex;
  flex-direction: column;
  padding: 0 6px 6px;
  border: 1px solid #1d1d1d;
  border-radius: 7px;
  background:
    linear-gradient(#0000 28px, #cfcfcf 40px, #d4d4d4 164px, #999 166px, #a0a0a0),
    linear-gradient(90deg, #a9a9a9 0, #b9b9b9 12%, #a4a4a4 19%, #6f6f6f 24%, #666 30%, #4a4a4a 36%, #4b4b4b 58%, #7a7a7a 74%, #a5a5a5 82%, #a9a9a9 100%);
  box-shadow: inset 0 0 0 1px rgba(255, 255, 255, 0.55), 0 0 12px 3px rgba(0, 0, 0, 0.55), 2px 6px 14px rgba(0, 0, 0, 0.6);
`;

const RedClose = styled.button`
  align-self: flex-start;
  width: 47px;
  height: 19px;
  display: grid;
  place-items: center;
  border: 1px solid #5a2620;
  border-top: 0;
  border-radius: 0 0 5px 5px;
  background: linear-gradient(#e0a095, #cf6f5f 48%, #b6301c 52%, #cc5a40);
  box-shadow: inset 0 0 0 1px rgba(255, 255, 255, 0.4);
`;

const WizardClient = styled.div`
  flex: 1;
  display: flex;
  flex-direction: column;
  border: 1px solid #3f3f3f;
  background: #fff;
  font: 11px/16px ${SANS};
`;

const WizardHead = styled.header`
  height: 61px;
  padding: 6px 6px 0;
  border-bottom: 1px solid #e4e4e4;
  p { margin-top: 8px; }
`;

const WizardTitle = styled.h1`
  padding-left: 2px;
  font: bold 14px/18px ${SANS};
`;

const WizardBody = styled.div`
  flex: 1;
  display: flex;
  gap: 2px;
  padding-top: 2px;
`;

const Steps = styled.nav`
  width: 165px;
  border-right: 1px solid #e8e8e8;
`;

const StepsHead = styled.div`
  height: 24px;
  margin-bottom: 1px;
  padding-left: 6px;
  font: bold 12px/24px ${SANS};
  background: linear-gradient(#fafafa, #ededed);
`;

const Step = styled.div<{ $current?: boolean; $done?: boolean }>`
  display: flex;
  align-items: center;
  gap: 10px;
  height: 23px;
  padding-left: 4px;
  margin-right: 1px;
  background: ${(p) => (p.$current ? "#efefef" : "none")};
  &::before {
    content: "";
    width: 8px;
    height: 8px;
    border-radius: 50%;
    background: radial-gradient(circle at 35% 35%, ${(p) => (p.$done ? "#b8f09a, #4cba36 60%, #7fb070" : "#a9a9ec, #5853c0 60%, #8684c0")});
  }
  a { color: #0f62c4; text-decoration: none; }
`;

const WizardForm = styled.form`
  flex: 1;
  display: flex;
  flex-direction: column;
  padding: 24px 21px 21px 37px;
  background: #f0f0f0;
`;

const Question = styled.fieldset`
  margin: 0 0 36px;
  padding: 0;
  border: 0;
  legend { padding: 0; margin-bottom: 10px; }
`;

const Option = styled.div<{ $indent?: boolean }>`
  display: flex;
  align-items: center;
  gap: 8px;
  height: 22px;
  padding-left: ${(p) => (p.$indent ? 3 : 0)}px;
  label { font-weight: bold; font-size: 12px; width: 137px; }
`;

const Radio = styled.input`
  appearance: none;
  width: 12px;
  height: 12px;
  margin: 0;
  border: 1px solid #8e8f8f;
  border-radius: 50%;
  background: radial-gradient(circle, #e3e3e3 35%, #fbfbfb 75%);
  &:checked { background: radial-gradient(circle, #6fc3e6 0 8%, #17608a 28%, #0c3658 42%, #f4f4f4 52%); }
`;

const PortInput = styled.input`
  width: 282px;
  height: 20px;
  padding: 0 3px;
  border: 1px solid #b5cfe7;
  border-top-color: #3d7bad;
  background: #fff;
`;

const Hint = styled.p`
  padding-left: 174px;
`;

const HelpLink = styled.a`
  margin-top: auto;
  color: #0f62c4;
`;

const WizardButtons = styled.div`
  display: flex;
  justify-content: flex-end;
  margin-top: 50px;
`;

const PushButton = styled.button<{ $primary?: boolean }>`
  width: ${(p) => (p.$primary ? 73 : 83)}px;
  height: 21px;
  border: 1px solid ${(p) => (p.$primary ? "#2c7fa5" : "#707070")};
  border-radius: 3px;
  background: linear-gradient(#f3f3f3, #ebebeb 48%, #dcdcdc 52%, #cecece);
  box-shadow: inset 0 0 0 1px ${(p) => (p.$primary ? "#5fcdf0" : "#fbfbfb")};
  margin-right: ${(p) => (p.$primary ? 8 : 5)}px;
  &:last-child { margin-right: 0; }
`;

const Wizard = () => (
  <WizardWindow role="dialog" aria-label="New Inbound Rule Wizard">
    <TitleBar $h={28}>
      <FirewallIcon /><TitleText>New Inbound Rule Wizard</TitleText>
      <RedClose aria-label="Close"><CloseGlyph /></RedClose>
    </TitleBar>
    <WizardClient>
      <WizardHead>
        <WizardTitle>Protocol and Ports</WizardTitle>
        <p>Specify the protocols and ports to which this rule applies.</p>
      </WizardHead>
      <WizardBody>
        <Steps>
          <StepsHead>Steps:</StepsHead>
          <Step $done><a href="#rule-type">Rule Type</a></Step>
          <Step $done $current>Protocol and Ports</Step>
          <Step>Action</Step>
          <Step>Profile</Step>
          <Step>Name</Step>
        </Steps>
        <WizardForm onSubmit={(e) => e.preventDefault()}>
          <Question>
            <legend>Does this rule apply to TCP or UDP?</legend>
            <Option><Radio type="radio" name="protocol" id="tcp" defaultChecked /><label htmlFor="tcp">TCP</label></Option>
            <Option><Radio type="radio" name="protocol" id="udp" /><label htmlFor="udp">UDP</label></Option>
          </Question>
          <Question>
            <legend>Does this rule apply to all local ports or specific local ports?</legend>
            <Option $indent><Radio type="radio" name="ports" id="all" /><label htmlFor="all">All local ports</label></Option>
            <Option $indent>
              <Radio type="radio" name="ports" id="specific" defaultChecked /><label htmlFor="specific">Specific local ports:</label>
              <PortInput aria-label="Port numbers" defaultValue="1935" />
            </Option>
            <Hint>Example: 80, 443, 5000-5010</Hint>
          </Question>
          <HelpLink href="#help">Learn more about protocol and ports</HelpLink>
          <WizardButtons>
            <PushButton type="button">&lt; Back</PushButton>
            <PushButton type="button" $primary>Next &gt;</PushButton>
            <PushButton type="button">Cancel</PushButton>
          </WizardButtons>
        </WizardForm>
      </WizardBody>
    </WizardClient>
  </WizardWindow>
);

/* ---------- paint window ---------- */

const PaintWindow = styled.section`
  position: absolute;
  inset: 33px 0 0;
  display: flex;
  flex-direction: column;
  background: #f0f0f0;
`;

const PaintTitle = styled.div`
  ${glass}
  display: flex;
  align-items: center;
  gap: 4px;
  height: 22px;
  flex: none;
  padding-right: 3px;
  border-bottom: 1px solid #4f4f54;
`;

const RibbonTabs = styled.div`
  display: flex;
  justify-content: space-between;
  align-items: center;
  height: 24px;
  padding-right: 4px;
  flex: none;
  background: #dfe9f5;
  border-bottom: 1px solid #b5cbe3;
`;

const FileTab = styled.button`
  display: flex;
  align-items: center;
  gap: 6px;
  width: 56px;
  height: 22px;
  padding-left: 15px;
  background: linear-gradient(#3a7cc8, #1d5aa8 50%, #174a92 52%, #3f8ad2);
`;

const Ribbon = styled.div`
  flex: none;
  height: 92px;
  padding: 8px 13px 0;
  border-bottom: 1px solid #9db5d0;
  background: linear-gradient(#f8fbff, #e6eef9 35%, #dae5f4 60%, #dfe9f6);
`;

const PasteButton = styled.button`
  display: flex;
  flex-direction: column;
  align-items: center;
  width: 28px;
  color: #1e395b;
  gap: 3px;
`;

const GroupName = styled.div`
  margin: 7px 0 0 14px;
  color: #8296ae;
`;

const QuickBar = styled.div`
  display: flex;
  align-items: center;
  gap: 9px;
  height: 25px;
  flex: none;
  padding-left: 6px;
  background: #dfe9f5;
  border-bottom: 1px solid #b5cbe3;
`;

const Workspace = styled.div`
  flex: 1;
  min-height: 0;
  display: flex;
`;

const Canvas = styled.div`
  position: relative;
  flex: 1;
  overflow: hidden;
  border-left: 5px solid #cfdaea;
  background: #e6e6e6;
`;

const CornerRow = styled.div`
  flex: none;
  display: flex;
  height: 18px;
  padding-right: 17px;
  border-top: 1px solid #999;
  border-bottom: 1px solid #999;
  background: #f0f0f0;
  > * { flex: 1; }
`;

const PaintStatus = styled.footer`
  flex: none;
  display: flex;
  height: 22px;
  background: #f0edec;
  white-space: nowrap;
`;

const StatusItem = styled.div<{ $w?: number }>`
  display: flex;
  align-items: center;
  gap: 5px;
  padding: 4px 0 0 6px;
  line-height: 16px;
  ${(p) => (p.$w ? `width: ${p.$w}px;` : "flex: 1;")}
  border-right: 1px solid #d5d2d1;
`;

const ZoomGroup = styled.div`
  display: flex;
  align-items: center;
  width: 199px;
  gap: 7px;
  padding: 2px 4px 0 21px;
`;

const ZoomButton = styled.button`
  width: 15px;
  height: 15px;
  flex: none;
  border: 1px solid #666;
  border-radius: 50%;
  background: #f6f6f6;
  display: grid;
  place-items: center;
`;

const ZoomSlider = styled.input`
  appearance: none;
  flex: 1;
  min-width: 0;
  height: 15px;
  margin: 0 4px;
  background: linear-gradient(#0000 6px, #8b8b8b 6px 7px, #fff 7px 8px, #0000 8px);
  &::-webkit-slider-thumb {
    appearance: none;
    width: 9px;
    height: 15px;
    border: 1px solid #6b6b6b;
    border-radius: 2px 2px 5px 5px;
    background: #f4f4f4;
  }
`;

/* ---------- pasted page on the canvas ---------- */

const PageBar = styled.div<{ $kind: "nav" | "info" | "warn" | "black" }>`
  display: flex;
  align-items: center;
  justify-content: space-between;
  ${(p) =>
    ({
      nav: "height: 33px; padding: 0 14px 4px 10px; background: linear-gradient(#ececec,#e2e2e2); border-bottom: 1px solid #9d9d9d;",
      info: "height: 37px; padding: 0 14px 0 17px; background: linear-gradient(#e8e8e8,#d9d9d9); border-bottom: 1px solid #a8a8a8;",
      warn: "height: 37px; padding: 0 18px 0 13px; background: linear-gradient(#fdedab,#f9e38e); border-bottom: 1px solid #a59a70;",
      black: "height: 63px; padding: 0 26px 2px 15px; background: #1d1d1d; border-bottom: 1px solid #000;",
    })[p.$kind]}
`;

const Omnibox = styled.label`
  display: flex;
  align-items: center;
  width: 96%;
  height: 27px;
  padding: 0 3px;
  border: 1px solid #a5a5a5;
  border-radius: 3px;
  background: #fff;
  input { flex: 1; border: 0; outline: 0; background: none; }
`;

const WarnLink = styled.a`
  color: #3d6d80;
  font: 14px/20px "Open Sans", sans-serif;
`;

const UserLine = styled.div`
  display: flex;
  align-items: center;
  gap: 4px;
  color: #8d8d8d;
  font: 14px/20px ${SANS};
  a { color: #e8e8e8; text-decoration: none; }
`;

const PageBody = styled.div`
  display: flex;
  gap: 20px;
  padding: 20px 10px 0 15px;
  font: 14px/20px ${SANS};
  color: #333;
`;

const SideCard = styled.div`
  width: 220px;
  height: 560px;
  padding-top: 169px;
  border: 1px solid #c9c9c9;
  border-radius: 4px;
  background: #dedede;
`;

const SideActive = styled.div`
  height: 30px;
  background: #dc7623;
`;

const PageMain = styled.div`
  flex: 1;
`;

const PageButtons = styled.div`
  display: flex;
  justify-content: flex-end;
  gap: 3px;
  padding-bottom: 31px;
  margin-bottom: 20px;
  border-bottom: 1px solid #c2c2c2;
`;

const PageButton = styled.button`
  display: flex;
  align-items: center;
  gap: 4px;
  height: 34px;
  padding: 0 12px;
  border: 1px solid #b5b5b5;
  border-radius: 4px;
`;

const PageColumns = styled.div`
  display: flex;
  gap: 15px;
`;

const StreamColumn = styled.div`
  flex: 1;
  display: flex;
  flex-direction: column;
`;

const HideHelp = styled.button`
  align-self: flex-end;
  height: 22px;
  padding: 0 6px;
  border: 1px solid #b5b5b5;
  border-radius: 3px;
  font-size: 12px;
`;

const StreamRow = styled.div`
  height: 38px;
  margin-top: 107px;
  border: solid #c8c8c8;
  border-width: 1px 0;
  background: #dcdcdc;
`;

const HelpColumn = styled.div`
  width: 382px;
  padding-left: 15px;
  border-left: 1px dotted #777;
  p { margin-bottom: 10px; }
`;

const HelpHeading = styled.h2`
  font: 18px/28px ${SANS};
  margin-bottom: 6px;
`;

/* Windows captured inside the pasted picture */
const PastedConsole = styled.div`
  position: absolute;
  left: 40px;
  top: 0;
  bottom: -11px;
  width: 1061px;
  display: grid;
  grid-template-columns: 191px 747px 1fr;
  gap: 3px;
  align-items: stretch;
  padding: 0 7px;
  border: solid #333;
  border-width: 0 1px;
  background: linear-gradient(90deg, #7c7c7c, #a5a5a5 4px, #8c8c8c 7px, #e4e4e4 8px, #e4e4e4 1053px, #8c8c8c 1054px, #6f6f6f);
  box-shadow: 1px 0 12px rgba(0, 0, 0, 0.55);
`;

const PastedPane = styled.div`
  display: flex;
  flex-direction: column;
  justify-content: flex-end;
  overflow: hidden;
  background: #fff;
  border: solid #868b92;
  border-width: 0 1px;
`;

const PastedWizard = styled.div`
  position: absolute;
  left: 60px;
  bottom: 17px;
  width: 727px;
  height: 40px;
  padding: 0 6px 7px;
  border: 1px solid #1d1d1d;
  border-radius: 7px;
  background: #a2a2a2;
  box-shadow: inset 0 0 0 1px rgba(255, 255, 255, 0.5), 0 2px 12px 3px rgba(0, 0, 0, 0.6);
  &::before { content: ""; display: block; height: 100%; border: 1px solid #444; background: #d5d5d5; }
`;

const Paint = () => (
  <PaintWindow>
    <PaintTitle><PaletteIcon /><TitleText>wozefirewall1.jpg - Paint</TitleText><Captions restore dark /></PaintTitle>
    <RibbonTabs><FileTab aria-label="File"><FileTabIcon /><Tri dir="down" size={8} color="#fff" /></FileTab><HelpRoundIcon /></RibbonTabs>
    <Ribbon>
      <PasteButton><ClipboardIcon />Paste<Tri dir="down" size={6} color="#44546a" /></PasteButton>
      <GroupName>Clipboard</GroupName>
    </Ribbon>
    <QuickBar><SaveIcon /><UndoIcon /></QuickBar>
    <Workspace>
      <Canvas>
        <PageBar $kind="nav">
          <BackIcon />
          <Omnibox><input aria-label="Address" /><StarIcon /></Omnibox>
        </PageBar>
        <PageBar $kind="info"><KeyIcon /></PageBar>
        <PageBar $kind="warn"><FaPuzzlePiece size={20} color="#4d4836" /><WarnLink href="#more">Learn more</WarnLink></PageBar>
        <PageBar $kind="black">
          <WowzaIcon size={42} />
          <UserLine><FaUser size={11} />Jimmy | <a href="#out">Sign Out</a></UserLine>
        </PageBar>
        <PageBody>
          <SideCard><SideActive /></SideCard>
          <PageMain>
            <PageButtons>
              <PageButton><FaPlay size={13} />Test Players...</PageButton>
              <PageButton><FilesIcon />Copy...</PageButton>
              <PageButton><RestartIcon />Restart...</PageButton>
              <PageButton><FaRegTrashAlt size={12} />Delete...</PageButton>
            </PageButtons>
            <PageColumns>
              <StreamColumn><HideHelp>Hide Help »</HideHelp><StreamRow /></StreamColumn>
              <HelpColumn>
                <HelpHeading>About Incoming Streams</HelpHeading>
                <p>You can view details about all live streams published by encoders to this application or live streams that this application connects to and record the streams to video on demand (VOD) files for later playback.</p>
                <p>To update the list of incoming streams, click <b>Refresh</b>. Wowza Streaming Engine doesn't update the list automatically as new streams are published to this application.</p>
                <p>To view details about an incoming stream, click the incoming stream name in the list.</p>
                <p>To organize the list of incoming streams alphabetically, click <b>View by Stream</b>. If the incoming streams are part of a group of streams, either the transcoded output in a stream name group or live streams referenced in a SMIL file, click <b>View by Group</b> to organize the list of incoming streams alphabetically by group name. Incoming streams</p>
              </HelpColumn>
            </PageColumns>
          </PageMain>
        </PageBody>
        <PastedConsole>
          <PastedPane />
          <PastedPane>
            <RuleTable>
              <RuleCols />
              <tbody><RuleRow r={RULES[27]} /><RuleRow r={RULES[28]} /></tbody>
            </RuleTable>
          </PastedPane>
          <PastedPane />
          <PastedWizard />
        </PastedConsole>
      </Canvas>
      <Scrollbar v gap={24} size="458px" />
    </Workspace>
    <CornerRow><Scrollbar gap={2} size="calc(100% - 62px)" /></CornerRow>
    <PaintStatus>
      <StatusItem $w={156}><MoveIcon /></StatusItem>
      <StatusItem $w={156}><SizeIcon dashed /></StatusItem>
      <StatusItem $w={156}><SizeIcon />1600 × 900px</StatusItem>
      <StatusItem $w={156}><DiskIcon />Size: 388.8KB</StatusItem>
      <StatusItem />
      <ZoomGroup>
        100%
        <ZoomButton aria-label="Zoom out"><svg width="9" height="9" viewBox="0 0 9 9"><path d="M1 4.500h7" stroke="#333" strokeWidth="1.500" /></svg></ZoomButton>
        <ZoomSlider type="range" aria-label="Zoom" defaultValue={50} />
        <ZoomButton aria-label="Zoom in"><svg width="9" height="9" viewBox="0 0 9 9"><path d="M1 4.500h7M4.500 1v7" stroke="#333" strokeWidth="1.500" /></svg></ZoomButton>
      </ZoomGroup>
    </PaintStatus>
  </PaintWindow>
);

export default function App() {
  return (
    <>
      <GlobalStyle />
      <Desktop>
        <BrowserTop>
          <TabStrip>
            <Tab $active $w={196}><TabOutline fill="#f4f4f4" /><WowzaIcon size={16} /><TabLabel>live: Incoming Streams | Wowza</TabLabel><TabClose aria-label="Close tab"><CloseX /></TabClose></Tab>
            <Tab $w={192}><TabOutline fill="#b3b4b8" /><PageIcon /><TabLabel>How to configure firewalls</TabLabel><TabClose aria-label="Close tab"><CloseX /></TabClose></Tab>
            <NewTab aria-label="New tab">
              <svg width="29" height="13" viewBox="0 0 29 13"><path d="M.5.5H22Q24 .5 25 2L28.500 12.500H6Q4.500 12.500 4 11z" fill="#bcbdc2" stroke="#808084" strokeWidth=".8" /></svg>
            </NewTab>
          </TabStrip>
          <Captions restore dark />
        </BrowserTop>
        <BrowserBar />
        <ConsoleWindow $top={20} $back>
          <TitleBar $h={27}><FirewallIcon /><TitleText>Windows Firewall with Advanced Security</TitleText><Captions /></TitleBar>
        </ConsoleWindow>
        <Paint />
        <Console />
        <Wizard />
      </Desktop>
    </>
  );
}
